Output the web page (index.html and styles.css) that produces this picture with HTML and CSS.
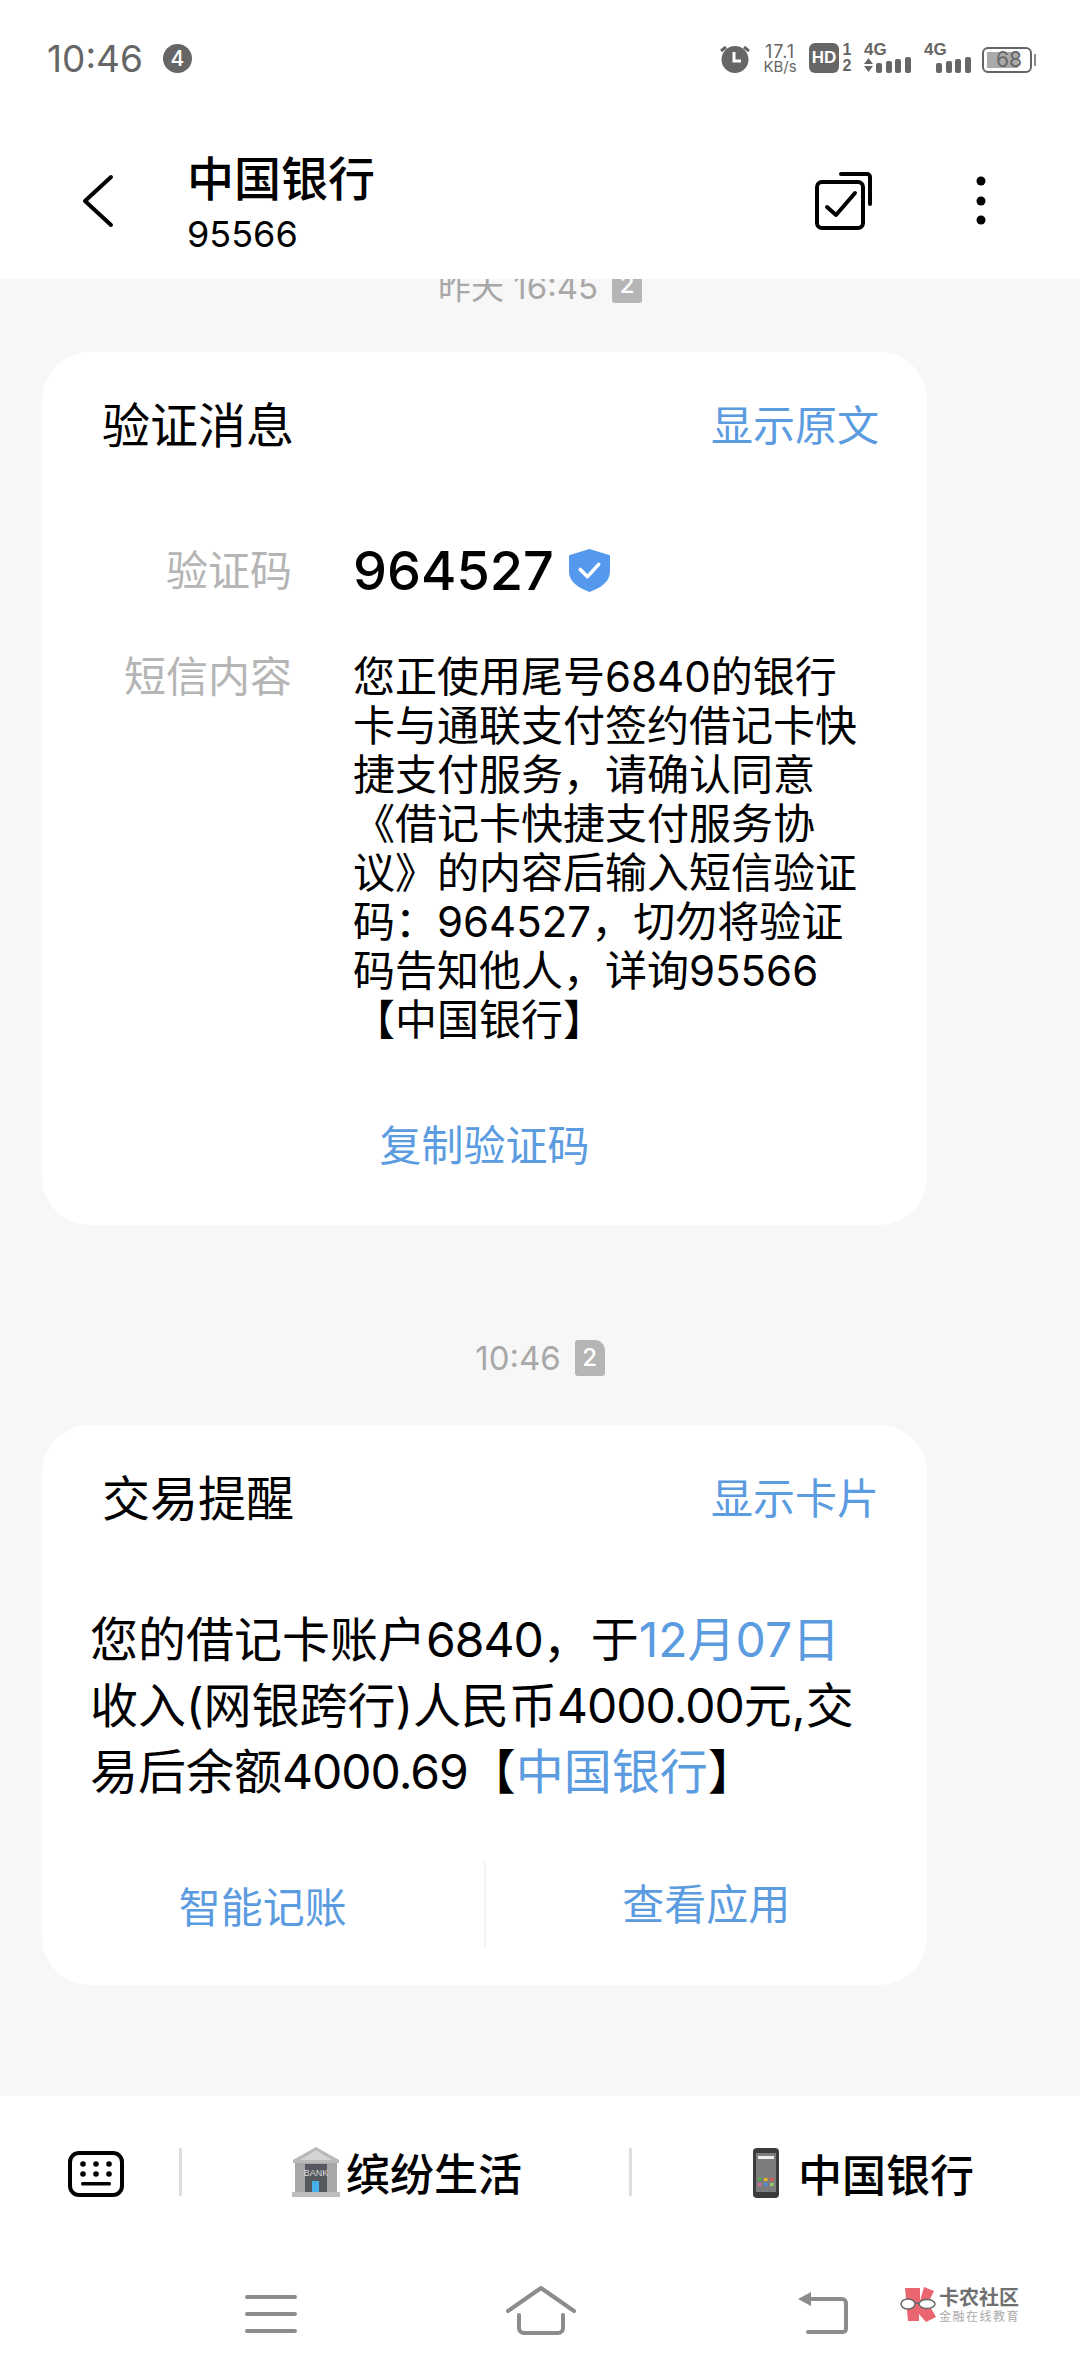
FILE: index.html
```html
<!DOCTYPE html>
<html lang="zh-CN">
<head>
    <meta charset="UTF-8">
    <meta name="viewport" content="width=device-width, initial-scale=1.0">
    <title>中国银行</title>
    <link rel="stylesheet" href="styles.css">
</head>
<body>
    <div class="phone">
        <div class="status-bar">
            <span class="clock">10:46</span>
            <span class="notif-count">4</span>
            <div class="status-icons">
                <svg class="alarm" width="32" height="30" viewBox="0 0 32 30">
                    <circle cx="16" cy="16.500" r="13.500" fill="#666"/>
                    <path d="M15 9v9h7" fill="none" stroke="#fff" stroke-width="3"/>
                    <path d="M2 8l5-4M30 8l-5-4" stroke="#666" stroke-width="3"/>
                </svg>
                <div class="speed"><span>17.1</span><span>KB/s</span></div>
                <div class="hd">HD</div>
                <div class="sim-nums"><span>1</span><span>2</span></div>
                <div class="signal">
                    <span class="net">4G</span>
                    <svg width="48" height="16" viewBox="0 0 48 16">
                        <path d="M0 7l4.500-6 4.500 6zM0 9h9l-4.500 6z" fill="#666"/>
                        <rect x="12" y="6" width="6" height="10" rx="2" fill="#666"/>
                        <rect x="22" y="4" width="6" height="12" rx="2" fill="#666"/>
                        <rect x="31" y="2" width="6" height="14" rx="2" fill="#666"/>
                        <rect x="41" y="0" width="6" height="16" rx="2" fill="#666"/>
                    </svg>
                </div>
                <div class="signal">
                    <span class="net">4G</span>
                    <svg width="48" height="16" viewBox="0 0 48 16">
                        <rect x="12" y="6" width="6" height="10" rx="2" fill="#666"/>
                        <rect x="22" y="4" width="6" height="12" rx="2" fill="#666"/>
                        <rect x="31" y="2" width="6" height="14" rx="2" fill="#666"/>
                        <rect x="41" y="0" width="6" height="16" rx="2" fill="#666"/>
                    </svg>
                </div>
                <div class="battery"><span class="battery-fill"></span><span class="battery-num">68</span></div>
            </div>
        </div>

        <header class="top-bar">
            <svg class="back" width="34" height="56" viewBox="0 0 34 56">
                <path d="M30 3L4 27l26 24" fill="none" stroke="#000" stroke-width="4" stroke-linecap="round" stroke-linejoin="round"/>
            </svg>
            <div class="sender">
                <div class="sender-name">中国银行</div>
                <div class="sender-num">95566</div>
            </div>
            <svg class="select-icon" width="58" height="58" viewBox="0 0 58 58">
                <path d="M26 2h26a3 3 0 0 1 3 3v27" fill="none" stroke="#000" stroke-width="4" stroke-linecap="round"/>
                <rect x="2" y="10" width="46" height="46" rx="5" fill="none" stroke="#000" stroke-width="4"/>
                <path d="M12 35l9 8 19-22" fill="none" stroke="#000" stroke-width="4" stroke-linecap="round" stroke-linejoin="round"/>
            </svg>
            <svg class="more-icon" width="10" height="50" viewBox="0 0 10 50">
                <circle cx="5" cy="5" r="4.500" fill="#000"/>
                <circle cx="5" cy="25" r="4.500" fill="#000"/>
                <circle cx="5" cy="44" r="4.500" fill="#000"/>
            </svg>
        </header>

        <main class="thread">
            <div class="stamp stamp-cut"><span>昨天 16:45</span><span class="sim-tag">2</span></div>

            <section class="card">
                <div class="card-head">
                    <h2>验证消息</h2>
                    <a class="link">显示原文</a>
                </div>
                <div class="field field-code">
                    <div class="field-label">验证码</div>
                    <div class="code">964527
                        <svg width="41" height="43" viewBox="0 0 40 42">
                            <path d="M20 0l20 6v16c0 10-9 16-20 20C9 38 0 32 0 22V6z" fill="#5599ee"/>
                            <path d="M11 20l7 7 11-12" fill="none" stroke="#fff" stroke-width="3.500" stroke-linecap="round" stroke-linejoin="round"/>
                        </svg>
                    </div>
                </div>
                <div class="field">
                    <div class="field-label">短信内容</div>
                    <div class="field-body">您正使用尾号6840的银行<br>卡与通联支付签约借记卡快<br>捷支付服务，请确认同意<br>《借记卡快捷支付服务协<br>议》的内容后输入短信验证<br>码：964527，切勿将验证<br>码告知他人，详询95566<br>【中国银行】</div>
                </div>
                <div class="card-action link">复制验证码</div>
            </section>

            <div class="stamp"><span>10:46</span><span class="sim-tag">2</span></div>

            <section class="card card-notice">
                <div class="card-head">
                    <h2>交易提醒</h2>
                    <a class="link">显示卡片</a>
                </div>
                <p class="notice-text">您的借记卡账户<span class="num">6840</span>，于<span class="link">12月07日</span><br>收入(网银跨行)人民币<span class="num">4000.00</span>元,交<br>易后余额<span class="num">4000.69</span>【<span class="link">中国银行</span>】</p>
                <div class="notice-actions">
                    <div class="link">智能记账</div>
                    <div class="link">查看应用</div>
                </div>
            </section>
        </main>

        <div class="menu-bar">
            <div class="menu-keys">
                <svg width="58" height="46" viewBox="0 0 56 46">
                    <rect x="2" y="2" width="52" height="42" rx="9" fill="none" stroke="#000" stroke-width="4"/>
                    <g fill="#000">
                        <circle cx="15" cy="13" r="2.800"/><circle cx="28" cy="13" r="2.800"/><circle cx="41" cy="13" r="2.800"/>
                        <circle cx="15" cy="23" r="2.800"/><circle cx="28" cy="23" r="2.800"/><circle cx="41" cy="23" r="2.800"/>
                        <rect x="13" y="31" width="30" height="3.500" rx="1.500"/>
                    </g>
                </svg>
            </div>
            <div class="menu-item menu-life">
                <svg width="50" height="50" viewBox="0 0 48 50">
                    <path d="M24 0L1 13v3h46v-3z" fill="#b9b9b9"/>
                    <path d="M24 3L8 13h32z" fill="#d4d4d4"/>
                    <rect x="3" y="16" width="42" height="30" fill="#a8a8a8"/>
                    <rect x="13" y="17" width="22" height="29" fill="#55585c"/>
                    <text x="24" y="29" text-anchor="middle" class="bank-word">BANK</text>
                    <rect x="20" y="34" width="7" height="12" fill="#45b0ec"/>
                    <rect x="0" y="45" width="48" height="5" fill="#bdbdbd"/>
                </svg>
                <span>缤纷生活</span>
            </div>
            <div class="menu-item menu-bank">
                <svg width="26" height="50" viewBox="0 0 26 50">
                    <rect width="26" height="50" rx="4" fill="#3c3c3c"/>
                    <rect x="3" y="5" width="20" height="39" fill="#7d7d7d"/>
                    <rect x="5" y="8" width="16" height="3" fill="#eee"/>
                    <g>
                        <rect x="5" y="30" width="3.500" height="3" fill="#4caf50"/><rect x="11" y="30" width="3.500" height="3" fill="#f0b429"/><rect x="17" y="30" width="3.500" height="3" fill="#e0584f"/>
                        <rect x="5" y="35" width="3.500" height="3" fill="#d46a9f"/><rect x="11" y="35" width="3.500" height="3" fill="#4a90d9"/><rect x="17" y="35" width="3.500" height="3" fill="#9ccc65"/>
                    </g>
                </svg>
                <span>中国银行</span>
            </div>
        </div>

        <nav class="nav-bar">
            <svg class="nav-menu" width="52" height="40" viewBox="0 0 52 40">
                <path d="M2 3h48M2 20h48M2 37h48" stroke="#8c8c8c" stroke-width="4" stroke-linecap="round"/>
            </svg>
            <svg class="nav-home" width="70" height="50" viewBox="0 0 70 50">
                <path d="M2 26L35 3l33 23" fill="none" stroke="#8c8c8c" stroke-width="4" stroke-linecap="round" stroke-linejoin="round"/>
                <path d="M13 30v13a5 5 0 0 0 5 5h34a5 5 0 0 0 5-5V30" fill="none" stroke="#8c8c8c" stroke-width="4" stroke-linecap="round"/>
            </svg>
            <svg class="nav-back" width="50" height="44" viewBox="0 0 50 44">
                <path d="M0 8L13 1v14z" fill="#8c8c8c"/>
                <path d="M12 8h32a4 4 0 0 1 4 4v26a3 3 0 0 1-3 3H10" fill="none" stroke="#8c8c8c" stroke-width="4" stroke-linecap="round"/>
            </svg>
            <div class="watermark">
                <svg width="38" height="36" viewBox="0 0 38 36">
                    <path d="M5 1h15v13l4-14 10 4-6 12 8 14-10 5-7-8v7H8z" fill="#e9656f"/>
                    <ellipse cx="8" cy="17" rx="7" ry="5" fill="#fff" stroke="#666" stroke-width="1.500"/>
                    <ellipse cx="27" cy="17" rx="8" ry="4.500" fill="#fff" stroke="#666" stroke-width="1.500"/>
                    <path d="M15 16h4" stroke="#666" stroke-width="1.500"/>
                </svg>
                <div class="watermark-text">
                    <span class="wm-main">卡农社区</span>
                    <span class="wm-sub">金融在线教育</span>
                </div>
            </div>
        </nav>
    </div>
</body>
</html>
```

FILE: styles.css
```css
* {
    box-sizing: border-box;
}

body {
    margin: 0;
    background-color: #fff;
    font-family: Inter, "Noto Sans CJK SC", sans-serif;
    color: #000;
}

.phone {
    width: 1080px;
    height: 2376px;
    display: flex;
    flex-direction: column;
    overflow: hidden;
    position: relative;
}

/* status bar */
.status-bar {
    height: 116px;
    flex: none;
    display: flex;
    align-items: center;
    padding: 0 47px;
    color: #666;
}

.clock {
    font-size: 37px;
    line-height: 1;
    width: 116px;
}

.notif-count {
    width: 29px;
    height: 29px;
    border-radius: 50%;
    background-color: #666;
    color: #fff;
    font-size: 21px;
    font-weight: 500;
    line-height: 29px;
    text-align: center;
}

.status-icons {
    margin-left: auto;
    margin-right: 1px;
    display: flex;
    align-items: center;
    height: 30px;
}

.alarm {
    margin-right: 10px;
}

.speed {
    width: 38px;
    margin-right: 10px;
    display: flex;
    flex-direction: column;
    align-items: center;
    font-size: 15px;
    line-height: 14px;
}

.speed span:first-child {
    font-size: 18px;
    line-height: 17px;
    letter-spacing: 1px;
}

.hd {
    width: 30px;
    height: 30px;
    background-color: #666;
    border-radius: 6px;
    color: #fff;
    font-family: "Liberation Sans", sans-serif;
    font-size: 17px;
    font-weight: 700;
    line-height: 30px;
    text-align: center;
}

.sim-nums {
    width: 12px;
    margin: 0 11px 0 2px;
    display: flex;
    flex-direction: column;
    align-items: center;
    font-family: "Liberation Sans", sans-serif;
    font-size: 16px;
    font-weight: 700;
    line-height: 16px;
}

.signal {
    width: 48px;
    margin-right: 12px;
    display: flex;
    flex-direction: column;
    height: 30px;
    justify-content: space-between;
}

.net {
    font-family: "Liberation Sans", sans-serif;
    font-size: 17px;
    font-weight: 700;
    line-height: 14px;
}

.battery {
    width: 50px;
    height: 26px;
    margin-left: -2px;
    margin-top: 3px;
    border: 2px solid #666;
    border-radius: 6px;
    display: flex;
    align-items: center;
    justify-content: center;
    position: relative;
    font-size: 21px;
}

.battery::after {
    content: "";
    position: absolute;
    right: -6px;
    top: 5px;
    width: 2px;
    height: 12px;
    background-color: #888;
}

.battery-fill {
    position: absolute;
    left: 3px;
    top: 3px;
    bottom: 3px;
    width: 31px;
    background-color: #aaa;
}

.battery-num {
    position: relative;
    line-height: 1;
    margin-left: 4px;
}

/* header */
.top-bar {
    height: 163px;
    flex: none;
    display: flex;
    align-items: flex-start;
    padding-left: 81px;
}

.back {
    margin-top: 58px;
}

.sender {
    margin-left: 72px;
    margin-top: 33px;
}

.sender-name {
    font-size: 47px;
    font-weight: 500;
    line-height: 60px;
}

.sender-num {
    font-size: 36px;
    line-height: 46px;
    margin-top: 2px;
}

.select-icon {
    margin-left: auto;
    margin-top: 56px;
}

.more-icon {
    margin: 60px 94px 0 103px;
}

/* messages */
.thread {
    flex: 1;
    min-height: 0;
    background-color: #f7f7f7;
    overflow: hidden;
}

.stamp {
    height: 40px;
    margin-top: 113px;
    margin-bottom: 47px;
    display: flex;
    align-items: center;
    justify-content: center;
    gap: 14px;
    font-size: 33px;
    color: #a8a8a8;
}

.stamp.stamp-cut {
    margin-top: -14px;
}

.sim-tag {
    width: 30px;
    height: 36px;
    background-color: #b5b5b5;
    border-radius: 3px 10px 3px 3px;
    color: #fff;
    font-size: 24px;
    font-weight: 500;
    line-height: 36px;
    text-align: center;
}

.card {
    width: 885px;
    height: 873px;
    margin-left: 42px;
    background-color: #fff;
    border-radius: 48px;
    display: flex;
    flex-direction: column;
}

.card-notice {
    height: 560px;
}

.card-head {
    display: flex;
    justify-content: space-between;
    align-items: center;
    padding: 40px 48px 0 60px;
    height: 100px;
}

.card-head h2 {
    margin: 0;
    font-size: 48px;
    font-weight: 400;
}

.link {
    color: #5b9be0;
}

.card-head .link {
    font-size: 42px;
}

.field {
    display: flex;
    font-size: 42px;
    line-height: 49px;
}

.field-code {
    margin-top: 85px;
    height: 66px;
    align-items: center;
}

.field-label {
    width: 250px;
    flex: none;
    text-align: right;
    color: #b5b5b5;
}

.field-code + .field {
    margin-top: 49px;
}

.field-body {
    margin-left: 61px;
    white-space: nowrap;
}

.code {
    margin-left: 61px;
    display: flex;
    align-items: center;
    gap: 15px;
    font-size: 54px;
    font-weight: 500;
}

.card-action {
    margin-top: 72px;
    text-align: center;
    font-size: 42px;
    line-height: 60px;
}

.notice-text {
    margin: 82px 0 0 48px;
    font-size: 48px;
    line-height: 66px;
    white-space: nowrap;
}

.num {
    letter-spacing: -1px;
}

.notice-actions {
    display: flex;
    align-items: center;
    margin-top: 57px;
    height: 85px;
    font-size: 42px;
    text-align: center;
}

.notice-actions div {
    flex: 1;
}

.notice-actions div + div {
    border-left: 2px solid #f2f2f2;
    line-height: 85px;
}

/* suggestion bar */
.menu-bar {
    height: 154px;
    flex: none;
    display: flex;
    align-items: flex-start;
    padding-top: 52px;
    background-color: #fff;
}

.menu-keys {
    width: 182px;
    padding: 3px 0 0 67px;
    height: 48px;
    border-right: 3px solid #ddd;
}

.menu-item {
    display: flex;
    align-items: center;
    height: 50px;
    font-size: 44px;
    font-weight: 500;
}

.menu-life {
    width: 450px;
    padding-left: 109px;
    gap: 5px;
    border-right: 3px solid #ddd;
    height: 48px;
}

.menu-bank {
    padding-left: 121px;
    gap: 19px;
}

/* navigation */
.nav-bar {
    height: 126px;
    flex: none;
    position: relative;
    display: flex;
    align-items: flex-start;
    padding-top: 35px;
    background-color: #fff;
}

.nav-menu {
    margin: 9px 0 0 245px;
}

.nav-home {
    margin: 0 0 0 209px;
}

.nav-back {
    margin: 6px 0 0 222px;
}

.watermark {
    position: absolute;
    left: 900px;
    top: 37px;
    display: flex;
    gap: 1px;
}

.watermark-text {
    display: flex;
    flex-direction: column;
}

.wm-main {
    font-size: 20px;
    font-weight: 700;
    line-height: 22px;
    color: #707070;
}

.wm-sub {
    font-size: 12px;
    line-height: 16px;
    color: #aaa;
    letter-spacing: 1.500px;
}

.bank-word {
    font-family: "Liberation Sans", sans-serif;
    font-size: 9px;
    fill: #ddd;
}
```
